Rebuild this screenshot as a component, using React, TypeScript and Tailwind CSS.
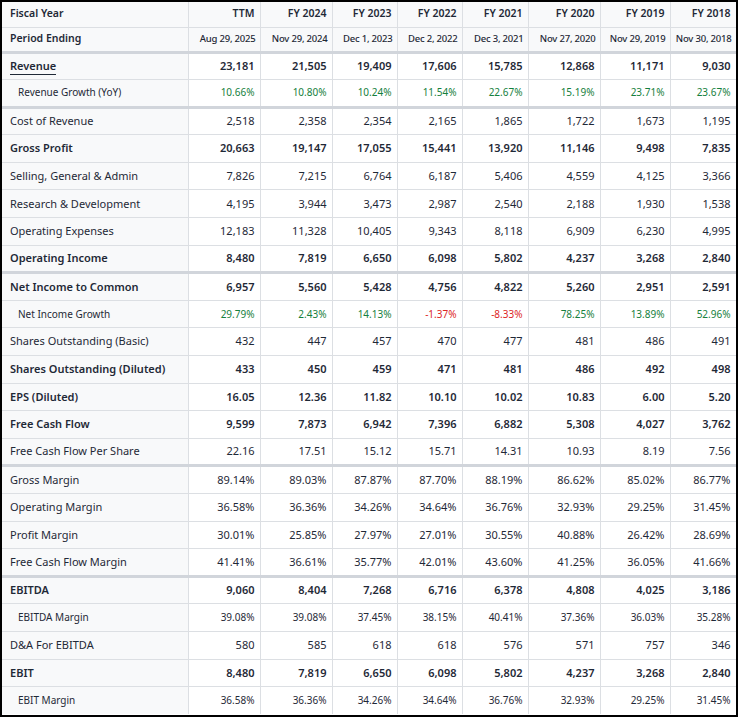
const cols = ["TTM", "FY 2024", "FY 2023", "FY 2022", "FY 2021", "FY 2020", "FY 2019", "FY 2018"];
const dates = ["Aug 29, 2025", "Nov 29, 2024", "Dec 1, 2023", "Dec 2, 2022", "Dec 3, 2021", "Nov 27, 2020", "Nov 29, 2019", "Nov 30, 2018"];
const widths = ["w-[72px]", "w-[72px]", "w-[65px]", "w-[65px]", "w-[66px]", "w-[72px]", "w-[70px]", "w-[66px]"];

type Row = { label: string; vals: string[]; kind?: "bold" | "sub" | "rev"; thick?: boolean; growth?: boolean };

const rows: Row[] = [
  { label: "Revenue", kind: "rev", vals: ["23,181", "21,505", "19,409", "17,606", "15,785", "12,868", "11,171", "9,030"] },
  { label: "Revenue Growth (YoY)", kind: "sub", growth: true, vals: ["10.66%", "10.80%", "10.24%", "11.54%", "22.67%", "15.19%", "23.71%", "23.67%"] },
  { label: "Cost of Revenue", thick: true, vals: ["2,518", "2,358", "2,354", "2,165", "1,865", "1,722", "1,673", "1,195"] },
  { label: "Gross Profit", kind: "bold", vals: ["20,663", "19,147", "17,055", "15,441", "13,920", "11,146", "9,498", "7,835"] },
  { label: "Selling, General & Admin", vals: ["7,826", "7,215", "6,764", "6,187", "5,406", "4,559", "4,125", "3,366"] },
  { label: "Research & Development", vals: ["4,195", "3,944", "3,473", "2,987", "2,540", "2,188", "1,930", "1,538"] },
  { label: "Operating Expenses", vals: ["12,183", "11,328", "10,405", "9,343", "8,118", "6,909", "6,230", "4,995"] },
  { label: "Operating Income", kind: "bold", vals: ["8,480", "7,819", "6,650", "6,098", "5,802", "4,237", "3,268", "2,840"] },
  { label: "Net Income to Common", kind: "bold", thick: true, vals: ["6,957", "5,560", "5,428", "4,756", "4,822", "5,260", "2,951", "2,591"] },
  { label: "Net Income Growth", kind: "sub", growth: true, vals: ["29.79%", "2.43%", "14.13%", "-1.37%", "-8.33%", "78.25%", "13.89%", "52.96%"] },
  { label: "Shares Outstanding (Basic)", vals: ["432", "447", "457", "470", "477", "481", "486", "491"] },
  { label: "Shares Outstanding (Diluted)", kind: "bold", vals: ["433", "450", "459", "471", "481", "486", "492", "498"] },
  { label: "EPS (Diluted)", kind: "bold", vals: ["16.05", "12.36", "11.82", "10.10", "10.02", "10.83", "6.00", "5.20"] },
  { label: "Free Cash Flow", kind: "bold", vals: ["9,599", "7,873", "6,942", "7,396", "6,882", "5,308", "4,027", "3,762"] },
  { label: "Free Cash Flow Per Share", vals: ["22.16", "17.51", "15.12", "15.71", "14.31", "10.93", "8.19", "7.56"] },
  { label: "Gross Margin", thick: true, vals: ["89.14%", "89.03%", "87.87%", "87.70%", "88.19%", "86.62%", "85.02%", "86.77%"] },
  { label: "Operating Margin", vals: ["36.58%", "36.36%", "34.26%", "34.64%", "36.76%", "32.93%", "29.25%", "31.45%"] },
  { label: "Profit Margin", vals: ["30.01%", "25.85%", "27.97%", "27.01%", "30.55%", "40.88%", "26.42%", "28.69%"] },
  { label: "Free Cash Flow Margin", vals: ["41.41%", "36.61%", "35.77%", "42.01%", "43.60%", "41.25%", "36.05%", "41.66%"] },
  { label: "EBITDA", kind: "bold", thick: true, vals: ["9,060", "8,404", "7,268", "6,716", "6,378", "4,808", "4,025", "3,186"] },
  { label: "EBITDA Margin", kind: "sub", vals: ["39.08%", "39.08%", "37.45%", "38.15%", "40.41%", "37.36%", "36.03%", "35.28%"] },
  { label: "D&A For EBITDA", vals: ["580", "585", "618", "618", "576", "571", "757", "346"] },
  { label: "EBIT", kind: "bold", vals: ["8,480", "7,819", "6,650", "6,098", "5,802", "4,237", "3,268", "2,840"] },
  { label: "EBIT Margin", kind: "sub", vals: ["36.58%", "36.36%", "34.26%", "34.64%", "36.76%", "32.93%", "29.25%", "31.45%"] },
];

export default function App() {
  return (
    <div className="w-[738px] h-[717px] border-2 border-black bg-white overflow-hidden text-[#1f2937]" style={{ fontFamily: '"Noto Sans", "Open Sans", sans-serif' }}>
      <table className="w-full border-collapse table-fixed">
        <colgroup>
          <col className="w-[186px]" />
          {widths.map((w, i) => <col key={i} className={w} />)}
        </colgroup>
        <thead>
          <tr className="h-[25px] bg-[#f8f9fa] text-[10.5px]">
            <th className="text-left pl-[8px] border-r border-b border-[#dcdfe3] font-semibold">Fiscal Year</th>
            {cols.map((c) => <th key={c} className="text-right pr-[5px] border-r border-b border-[#dcdfe3] font-semibold">{c}</th>)}
          </tr>
          <tr className="h-[25px] bg-[#f8f9fa] text-[10.5px]">
            <th className="text-left pl-[8px] border-r border-[#dcdfe3] font-semibold">Period Ending</th>
            {dates.map((c) => <th key={c} className="text-right pr-[4px] border-r border-[#dcdfe3] font-medium text-[9.5px] whitespace-nowrap tracking-[-0.2px]">{c}</th>)}
          </tr>
        </thead>
        <tbody>
          {rows.map((r, idx) => {
            const top = idx === 0 || r.thick ? "border-t-[3px] border-t-[#d1d5db]" : "border-t border-t-[#dcdfe3]";
            const bold = r.kind === "bold" || r.kind === "rev";
            const sub = r.kind === "sub";
            return (
              <tr key={r.label} className={`h-[27.6px] ${top}`}>
                <td className={`bg-[#f8f9fa] border-r border-[#dcdfe3] whitespace-nowrap ${sub ? "pl-[16px] text-[10px]" : "pl-[8px] text-[11px]"} ${bold ? "font-semibold" : ""}`}>
                  {r.kind === "rev" ? <span className="border-b border-[#1f2937] pb-[1px]">{r.label}</span> : r.label}
                </td>
                {r.vals.map((v, i) => {
                  const color = r.growth ? (v.startsWith("-") ? "text-[#dc2626]" : "text-[#15803d]") : "";
                  return (
                    <td key={i} className={`text-right pr-[5px] border-r border-[#dcdfe3] ${sub ? "text-[10px]" : "text-[11px]"} ${bold ? "font-semibold" : ""} ${color}`}>
                      {v}
                    </td>
                  );
                })}
              </tr>
            );
          })}
        </tbody>
      </table>
    </div>
  );
}
